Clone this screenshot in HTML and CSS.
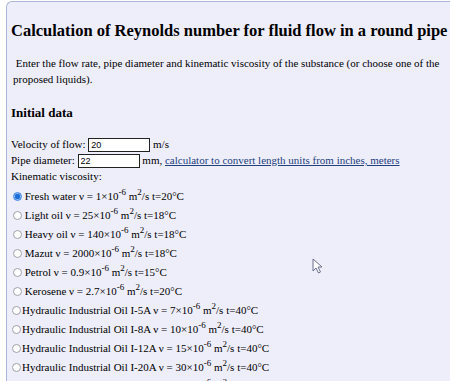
FILE: index.html
```html
<!DOCTYPE html>
<html lang="en">
<head>
  <meta charset="UTF-8">
  <title>Reynolds number calculator</title>
  <link rel="stylesheet" href="styles.css">
</head>
<body>
  <div class="page">
    <h1>Calculation of Reynolds number for fluid flow in a round pipe</h1>
    <p class="intro">&nbsp;Enter the flow rate, pipe diameter and kinematic viscosity of the substance (or choose one of the proposed liquids).</p>

    <h2>Initial data</h2>
    <div class="form">
      <div class="row">Velocity of flow: <input class="num" type="text" value="20" size="10"> m/s</div>
      <div class="row">Pipe diameter: <input class="num" type="text" value="22" size="10"> mm, <a href="#">calculator to convert length units from inches, meters</a></div>
      <div class="row">Kinematic viscosity:</div>

      <div class="liquids">
        <label class="opt"><input type="radio" name="liq" checked> Fresh water ν = 1×10<sup>-6</sup> m<sup>2</sup>/s t=20°C</label>
        <label class="opt"><input type="radio" name="liq"> Light oil ν = 25×10<sup>-6</sup> m<sup>2</sup>/s t=18°C</label>
        <label class="opt"><input type="radio" name="liq"> Heavy oil ν = 140×10<sup>-6</sup> m<sup>2</sup>/s t=18°C</label>
        <label class="opt"><input type="radio" name="liq"> Mazut ν = 2000×10<sup>-6</sup> m<sup>2</sup>/s t=18°C</label>
        <label class="opt"><input type="radio" name="liq"> Petrol ν = 0.9×10<sup>-6</sup> m<sup>2</sup>/s t=15°C</label>
        <label class="opt"><input type="radio" name="liq"> Kerosene ν = 2.7×10<sup>-6</sup> m<sup>2</sup>/s t=20°C</label>
        <label class="opt tight"><input type="radio" name="liq">Hydraulic Industrial Oil I-5A ν = 7×10<sup>-6</sup> m<sup>2</sup>/s t=40°C</label>
        <label class="opt tight"><input type="radio" name="liq">Hydraulic Industrial Oil I-8A ν = 10×10<sup>-6</sup> m<sup>2</sup>/s t=40°C</label>
        <label class="opt tight"><input type="radio" name="liq">Hydraulic Industrial Oil I-12A ν = 15×10<sup>-6</sup> m<sup>2</sup>/s t=40°C</label>
        <label class="opt tight"><input type="radio" name="liq">Hydraulic Industrial Oil I-20A ν = 30×10<sup>-6</sup> m<sup>2</sup>/s t=40°C</label>
        <label class="opt tight"><input type="radio" name="liq">Hydraulic Industrial Oil I-30A ν = 45×10<sup>-6</sup> m<sup>2</sup>/s t=40°C</label>
      </div>
    </div>
  </div>

  <!-- mouse pointer caught in the screenshot -->
  <svg class="cursor" width="11" height="16" viewBox="0 0 11 16">
    <path d="M1 1 L1 13 L4 10 L6.5 15 L8.5 14 L6 9 L10 9 Z" fill="#fff" stroke="#6a6f8a" stroke-width="1"/>
  </svg>
</body>
</html>
```

FILE: styles.css
```css
body {
  margin: 0;
  background: #fff;
  font-family: 'Liberation Serif', 'Times New Roman', serif;
  font-size: 11px;
  color: #000;
  overflow: hidden;
}
.page {
  margin: 1px 0 0 6px;
  padding: 4px 0 20px 4px;
  background: #eeeefb;
  border: 1px solid #a9b6d6;
  border-right: 0;
  border-radius: 6px 0 0 0;
  min-height: 400px;
}
h1 {
  font-size: 16.5px;
  margin: 15px 0 14px;
  white-space: nowrap;
}
.intro {
  margin: 0 0 18px 2px;
  line-height: 16px;
}
h2 {
  font-size: 13px;
  margin: 0 0 15px;
}
.row {
  line-height: 16px;
}
.num {
  font-family: 'Liberation Sans', Arial, sans-serif;
  font-size: 9px;
  width: 56px;
  height: 10px;
  padding: 1px 2px;
  margin: 0;
  border: 1px solid #222;
  vertical-align: baseline;
}
a {
  color: #23407e;
}
.liquids {
  margin-top: 3px;
}
.opt {
  display: block;
  line-height: 19px;
  padding-left: 2px;
  white-space: nowrap;
}
/* radios drawn by hand: light grey ring, blue dot when chosen */
.opt input {
  appearance: none;
  -webkit-appearance: none;
  box-sizing: border-box;
  width: 9px;
  height: 9px;
  margin: 0 0 0 0;
  border: 1px solid #a0a0a8;
  border-radius: 50%;
  background: #fff;
  vertical-align: -1px;
}
.opt input:checked {
  border-color: #3d86e4;
  background: radial-gradient(circle, #1f6fd8 0 2.5px, #8fbbef 3px);
}
.opt.tight {
  padding-left: 1px;
}
.opt.tight input {
  margin-right: 1px;
}
sup {
  font-size: 9px;
  line-height: 0;
}
.cursor {
  position: absolute;
  left: 312px;
  top: 258px;
}
```
